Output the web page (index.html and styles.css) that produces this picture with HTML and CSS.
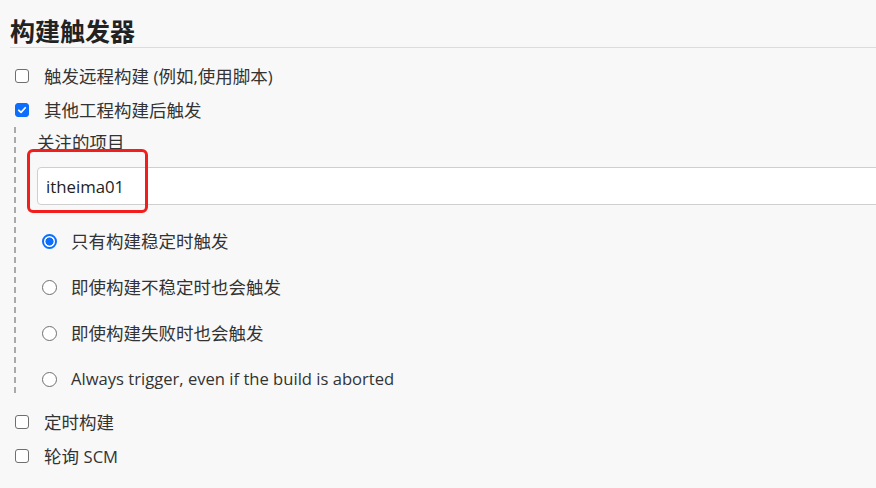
FILE: index.html
```html
<!DOCTYPE html>
<html lang="zh-CN">
<head>
<meta charset="utf-8">
<title>构建触发器</title>
<link rel="stylesheet" href="styles.css">
</head>
<body>
<section class="section">
  <h2 class="section-title">构建触发器</h2>
  <div class="rows">
    <label class="row"><span class="check"></span><span class="text">触发远程构建 <span class="latin">(</span>例如<span class="latin">,</span>使用脚本<span class="latin">)</span></span></label>
    <label class="row"><span class="check checked"><svg viewBox="0 0 14 14" width="14" height="14"><path d="M3.3 7.3 L5.9 9.8 L10.8 4.4" fill="none" stroke="#fff" stroke-width="2" stroke-linecap="round" stroke-linejoin="round"/></svg></span><span class="text">其他工程构建后触发</span></label>
  </div>
  <div class="nested">
    <div class="field-label">关注的项目</div>
    <div class="input-wrap">
      <div class="input">itheima01</div>
      <div class="highlight"></div>
    </div>
    <div class="radios">
      <label class="radio-row"><span class="radio on"></span><span class="text">只有构建稳定时触发</span></label>
      <label class="radio-row"><span class="radio"></span><span class="text">即使构建不稳定时也会触发</span></label>
      <label class="radio-row"><span class="radio"></span><span class="text">即使构建失败时也会触发</span></label>
      <label class="radio-row"><span class="radio"></span><span class="text latin">Always trigger, even if the build is aborted</span></label>
    </div>
  </div>
  <div class="rows bottom">
    <label class="row"><span class="check"></span><span class="text">定时构建</span></label>
    <label class="row"><span class="check"></span><span class="text">轮询 <span class="latin">SCM</span></span></label>
  </div>
</section>
</body>
</html>
```

FILE: styles.css
```css
html, body {
  margin: 0;
  padding: 0;
  background: #f8f8f8;
}
body {
  font-family: "Open Sans", "Noto Sans CJK SC", sans-serif;
  color: #333;
  font-size: 17.5px;
  width: 876px;
  height: 488px;
  overflow: hidden;
}
.latin {
  font-size: 16.6px;
}
.section {
  padding-left: 10px;
}
.section-title {
  margin: 0;
  padding-top: 13px;
  height: 34px;
  line-height: 34px;
  font-size: 25px;
  font-weight: 700;
  color: #222;
  border-bottom: 1px solid #dcdcdc;
  font-family: "Noto Sans CJK SC", sans-serif;
}
.rows {
  display: flex;
  flex-direction: column;
  padding-top: 11px;
}
.row {
  display: flex;
  align-items: center;
  height: 34px;
}
.check {
  width: 14px;
  height: 14px;
  box-sizing: border-box;
  border: 1.5px solid #6f6f6f;
  border-radius: 3px;
  margin-left: 5px;
  margin-right: 15px;
  background: #fff;
  display: flex;
  align-items: center;
  justify-content: center;
  flex: none;
}
.check.checked {
  background: #0b6efd;
  border-color: #0b6efd;
}
.check.checked svg {
  display: block;
}
.text {
  white-space: nowrap;
  line-height: 24px;
}
.nested {
  margin-left: 4px;
  border-left: 2px dashed #aaa;
  padding-left: 21px;
  padding-top: 2px;
  display: flex;
  flex-direction: column;
}
.field-label {
  line-height: 26px;
  height: 28px;
  color: #333;
}
.input-wrap {
  position: relative;
  margin-top: 10px;
}
.input {
  box-sizing: border-box;
  height: 38px;
  margin-right: -20px;
  background: #fff;
  border: 1px solid #cfcfcf;
  border-radius: 4px;
  padding-left: 8px;
  display: flex;
  align-items: center;
  font-size: 16.8px;
  color: #222;
}
.highlight {
  position: absolute;
  left: -10px;
  top: -18px;
  width: 121px;
  height: 64px;
  box-sizing: border-box;
  border: 3px solid #f21d1d;
  border-radius: 6px;
}
.radios {
  display: flex;
  flex-direction: column;
  gap: 18px;
  padding-top: 22px;
  padding-bottom: 0;
}
.radio-row {
  display: flex;
  align-items: center;
  height: 28px;
}
.radio {
  width: 15px;
  height: 15px;
  box-sizing: border-box;
  border: 1.5px solid #6f6f6f;
  border-radius: 50%;
  margin-left: 5px;
  margin-right: 14px;
  background: #fff;
  flex: none;
}
.radio.on {
  border: 2px solid #0b6efd;
  background: radial-gradient(circle, #0b6efd 0 3.8px, #fff 4.3px);
}
.bottom {
  padding-top: 12px;
}
```
